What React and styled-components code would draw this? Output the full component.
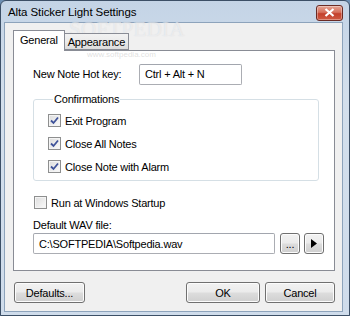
import React from 'react'
import styled, { createGlobalStyle } from 'styled-components'

const GlobalStyle = createGlobalStyle`
  html, body { margin: 0; padding: 0; background: #6d8fb3; }
  body { font-family: "Liberation Sans", Arial, sans-serif; font-size: 11px; letter-spacing: -0.2px; color: #000; }
`

const Window = styled.div`
  position: relative;
  width: 350px;
  height: 316px;
  box-sizing: border-box;
  border: 1px solid #3c4f66;
  border-radius: 6px 6px 0 0;
  background: linear-gradient(#c4d4e6, #d3dfec 30%, #cfdceb);
  display: flex;
  flex-direction: column;
  padding: 0 6px 3px 3px;
  overflow: hidden;
`

const TitleBar = styled.div`
  height: 21px;
  display: flex;
  align-items: center;
  justify-content: space-between;
  padding: 0 0 0 4px;
  font-size: 11.5px;
  letter-spacing: -0.1px;
`

const CloseButton = styled.div`
  width: 25px;
  height: 14px;
  margin-top: 2px;
  border: 1px solid #6b2b24;
  border-radius: 3px;
  background: linear-gradient(#e5a594, #d6705c 45%, #c3402c 55%, #cf5a42);
  display: flex;
  align-items: center;
  justify-content: center;
  box-shadow: inset 0 0 0 1px rgba(255,255,255,0.35);
`

const Client = styled.div`
  flex: 1;
  background: #f0f0f0;
  border: 1px solid #8da3bb;
  display: flex;
  flex-direction: column;
  padding: 7px 7px 8px 8px;
`

const TabStrip = styled.div`
  display: flex;
  align-items: flex-end;
  height: 20px;
  position: relative;
  z-index: 1;
`

const Tab = styled.div`
  box-sizing: border-box;
  height: ${p => (p.$active ? '21px' : '17px')};
  margin-bottom: ${p => (p.$active ? '-1px' : '0')};
  padding: ${p => (p.$active ? '3px 6px 0 6px' : '2px 3px 0 3px')};
  border: 1px solid #898c95;
  border-bottom: ${p => (p.$active ? 'none' : '1px solid #898c95')};
  border-left: ${p => (p.$left ? 'none' : '1px solid #898c95')};
  background: ${p => (p.$active ? '#fff' : 'linear-gradient(#f2f2f2, #ebebeb 50%, #dcdcdc)')};
  white-space: nowrap;
`

const Panel = styled.div`
  height: 221px;
  box-sizing: border-box;
  background: #fff;
  border: 1px solid #898c95;
  padding: 13px 0 0 19px;
  display: flex;
  flex-direction: column;
`

const HotkeyRow = styled.div`
  display: flex;
  align-items: center;
  height: 20px;
`

const Label = styled.span`
  width: 106px;
`

const TextBox = styled.div`
  box-sizing: border-box;
  width: ${p => p.$w}px;
  height: 21px;
  border: 1px solid #abadb3;
  border-top-color: #a2a6ae;
  border-radius: 2px;
  background: #fff;
  padding: 0 0 0 5px;
  display: flex;
  align-items: center;
  white-space: nowrap;
  overflow: hidden;
`

const Group = styled.fieldset`
  box-sizing: border-box;
  width: 286px;
  height: 88px;
  margin: 9px 0 0 0;
  padding: 9px 0 0 14px;
  border: 1px solid #d5dfe5;
  border-radius: 3px;
  display: flex;
  flex-direction: column;
  gap: 10px;
`

const Legend = styled.legend`
  padding: 0 1px;
  margin-left: 5px;
`

const CheckRow = styled.label`
  display: flex;
  align-items: center;
  gap: 4px;
  height: 13px;
  margin-top: ${p => p.$mt || 0}px;
  margin-left: ${p => p.$ml || 0}px;
`

const Box = styled.span`
  box-sizing: border-box;
  width: 13px;
  height: 13px;
  border: 1px solid #8e8f8f;
  background: linear-gradient(135deg, #dcdcdc, #fbfbfb);
  display: flex;
  align-items: center;
  justify-content: center;
  box-shadow: inset 0 0 0 1px #f4f4f4;
`

const WavLabel = styled.div`
  margin-top: 10px;
  line-height: 13px;
`

const WavRow = styled.div`
  display: flex;
  align-items: center;
  gap: 4px;
  margin-top: 1px;
`

const Button = styled.div`
  box-sizing: border-box;
  width: ${p => p.$w}px;
  height: 21px;
  border: 1px solid #707070;
  border-radius: 3px;
  background: linear-gradient(#f2f2f2, #ebebeb 48%, #dddddd 52%, #cfcfcf);
  box-shadow: inset 0 0 0 1px #fcfcfc;
  display: flex;
  align-items: center;
  justify-content: center;
  margin-left: ${p => p.$ml || 0}px;
`

const Footer = styled.div`
  display: flex;
  align-items: center;
  margin-top: 11px;
  padding-left: 1px;
`

const Spacer = styled.div`
  flex: 1;
`

const Watermark = styled.div`
  position: absolute;
  left: 68px;
  top: 20px;
  font-family: "Liberation Serif", serif;
  font-size: 21px;
  line-height: 16px;
  letter-spacing: 0.3px;
  color: rgba(255, 255, 255, 0.5);
  text-shadow: 0 0 1px rgba(140, 150, 165, 0.3);
  pointer-events: none;
`

const WatermarkUrl = styled.div`
  position: absolute;
  left: 86px;
  top: 50px;
  font-size: 8px;
  line-height: 8px;
  letter-spacing: 0;
  color: rgba(185, 185, 185, 0.45);
  pointer-events: none;
`

function Check({ checked }) {
  return (
    <Box>
      {checked && (
        <svg width="9" height="9" viewBox="0 0 9 9">
          <path d="M1 4.5 L3.5 7 L8 1.5" fill="none" stroke="#3f539a" strokeWidth="1.8" />
        </svg>
      )}
    </Box>
  )
}

export default function App() {
  return (
    <>
      <GlobalStyle />
      <Window>
        <TitleBar>
          <span>Alta Sticker Light Settings</span>
          <CloseButton>
            <svg width="11" height="9" viewBox="0 0 11 9">
              <path d="M1.5 1 L9.5 8 M9.5 1 L1.5 8" stroke="#fff" strokeWidth="2.2" />
            </svg>
          </CloseButton>
        </TitleBar>
        <Client>
          <TabStrip>
            <Tab $active>General</Tab>
            <Tab $left>Appearance</Tab>
          </TabStrip>
          <Panel>
            <HotkeyRow>
              <Label>New Note Hot key:</Label>
              <TextBox $w={103}>Ctrl + Alt + N</TextBox>
            </HotkeyRow>
            <Group>
              <Legend>Confirmations</Legend>
              <CheckRow><Check checked />Exit Program</CheckRow>
              <CheckRow><Check checked />Close All Notes</CheckRow>
              <CheckRow><Check checked />Close Note with Alarm</CheckRow>
            </Group>
            <CheckRow $mt={15} $ml={1}><Check />Run at Windows Startup</CheckRow>
            <WavLabel>Default WAV file:</WavLabel>
            <WavRow>
              <TextBox $w={242}>C:\SOFTPEDIA\Softpedia.wav</TextBox>
              <Button $w={20} $ml={1}>...</Button>
              <Button $w={20}>
                <svg width="6" height="9" viewBox="0 0 6 9">
                  <path d="M0 0 L6 4.5 L0 9 Z" fill="#000" />
                </svg>
              </Button>
            </WavRow>
          </Panel>
          <Footer>
            <Button $w={71}>Defaults...</Button>
            <Spacer />
            <Button $w={74}>OK</Button>
            <Button $w={70} $ml={5}>Cancel</Button>
          </Footer>
        </Client>
        <Watermark>SOFTPEDIA</Watermark>
        <WatermarkUrl>www.softpedia.com</WatermarkUrl>
      </Window>
    </>
  )
}
